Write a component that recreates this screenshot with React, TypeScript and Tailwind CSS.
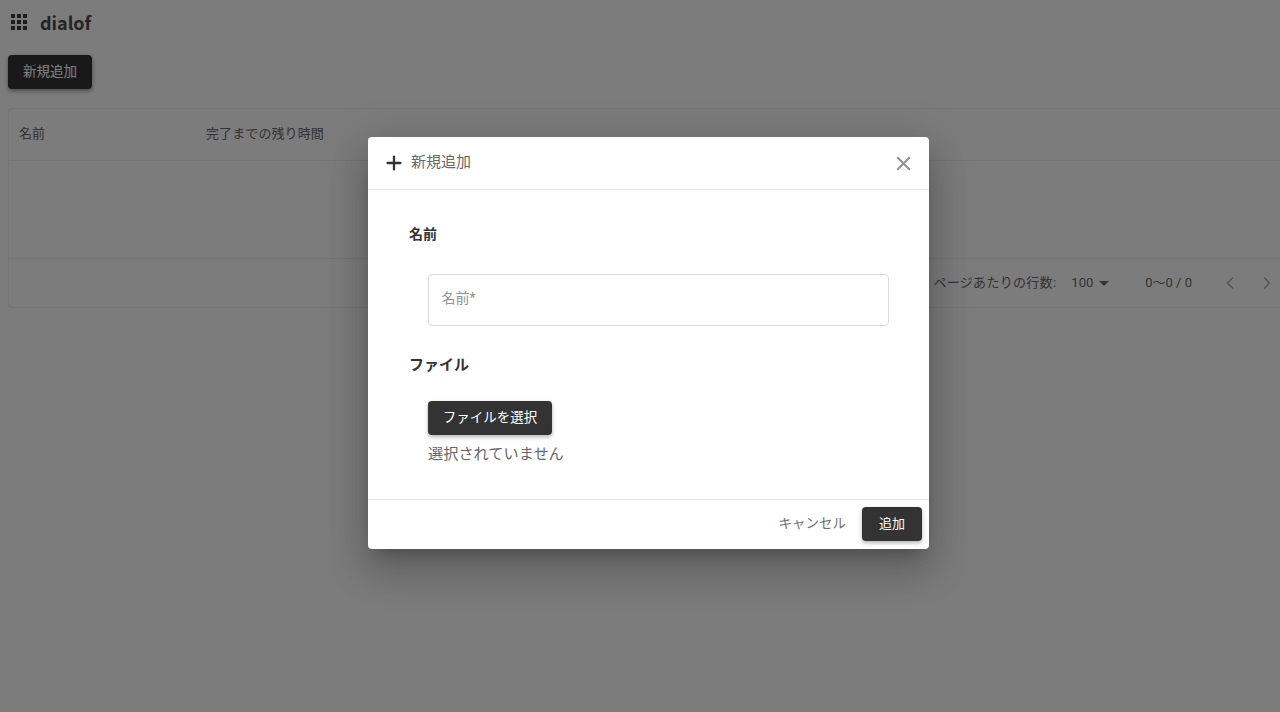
import React from 'react';
import { ChevronLeft, ChevronRight, Plus, X } from 'lucide-react';

const FONT = "font-['Roboto','Noto_Sans_CJK_JP',sans-serif]";

const GridIcon = () => (
  <svg width="24" height="24" viewBox="0 0 24 24" fill="#3a3a3a">
    <path d="M4 8h4V4H4v4zm6 12h4v-4h-4v4zm-6 0h4v-4H4v4zm0-6h4v-4H4v4zm6 0h4v-4h-4v4zm6-10v4h4V4h-4zm-6 4h4V4h-4v4zm6 6h4v-4h-4v4zm0 6h4v-4h-4v4z" />
  </svg>
);

export default function App() {
  return (
    <div className={`relative h-[712px] w-[1280px] overflow-hidden bg-[#f8f8f8] text-[#666666] ${FONT}`}>
      {/* Page behind the backdrop */}
      <header className="flex h-[44px] items-center pb-[1px] pl-[7px]">
        <GridIcon />
        <span className="ml-[9px] font-['Noto_Sans_CJK_JP',sans-serif] text-[18px] font-bold leading-none text-[#484848]">dialof</span>
      </header>
      <div className="px-2 pt-[11px]">
        <button className="h-[34px] w-[84px] rounded bg-[#333333] pb-[2px] text-[13.5px] text-white shadow-[0_2px_4px_rgba(0,0,0,0.4)]">
          新規追加
        </button>
      </div>
      <div className="ml-2 mt-[19px] h-[200px] w-[1300px] rounded border border-[#ebebeb]">
        <div className="flex h-[52px] items-center border-b border-[#ebebeb] pb-[1px] text-[13px]">
          <span className="w-[197px] pl-[10px]">名前</span>
          <span className="tracking-[0.1px]">完了までの残り時間</span>
        </div>
        <div className="h-[98px] border-b border-[#ebebeb]" />
        <div className="flex h-[48px] items-center justify-end pb-[1px] pr-[30px] text-[13px]">
          <span className="tracking-[0.3px]">ページあたりの行数:</span>
          <span className="ml-[15px]">100</span>
          <svg className="ml-[3px]" width="16" height="16" viewBox="0 0 16 16" fill="#666666">
            <path d="M3 6h10l-5 5z" />
          </svg>
          <span className="ml-[33px]">0〜0 / 0</span>
          <ChevronLeft className="ml-[28px] text-[#a8a8a8]" size={20} strokeWidth={1.75} />
          <ChevronRight className="ml-[17px] text-[#a8a8a8]" size={20} strokeWidth={1.75} />
        </div>
      </div>

      {/* Backdrop */}
      <div className="absolute inset-0 bg-black/50" />

      {/* Dialog */}
      <div className="absolute left-[368px] top-[137px] flex h-[412px] w-[561px] flex-col rounded bg-white shadow-[0_11px_15px_-7px_rgba(0,0,0,0.2),0_24px_38px_3px_rgba(0,0,0,0.14),0_9px_46px_8px_rgba(0,0,0,0.12)]">
        <div className="flex h-[53px] items-center border-b border-[#e8e8e8] pl-[15px] pr-[14px]">
          <Plus className="text-[#333333]" size={22} strokeWidth={2.5} />
          <span className="ml-[6px] pb-[2px] text-[15px] text-[#666666]">新規追加</span>
          <X className="ml-auto text-[#8f8f8f]" size={23} strokeWidth={2} />
        </div>
        <div className="flex-1 pl-[41px] pt-[34px]">
          <h3 className="text-[14px] font-bold leading-[20px] text-[#333333]">名前</h3>
          <div className="ml-[18.5px] mt-[30px] flex h-[52px] w-[461px] items-center rounded border border-[#dcdcdc] pb-[3px] pl-[13px] text-[14px] text-[#909090]">
            名前*
          </div>
          <h3 className="mt-[29px] text-[15px] font-bold leading-[20px] text-[#333333]">ファイル</h3>
          <div className="ml-[19px] mt-[26px]">
            <button className="h-[34px] w-[124px] rounded bg-[#333333] pb-[1px] text-[13.5px] text-white shadow-[0_2px_4px_rgba(0,0,0,0.3)]">
              ファイルを選択
            </button>
            <p className="mt-[8px] text-[15.2px] leading-[22px] text-[#666666]">選択されていません</p>
          </div>
        </div>
        <div className="flex h-[50px] items-center justify-end border-t border-[#e8e8e8] pb-[2px] pr-[7px]">
          <span className="text-[13.5px] text-[#707070]">キャンセル</span>
          <button className="ml-[16px] h-[34px] w-[60px] rounded bg-[#333333] text-[13px] text-white shadow-[0_2px_4px_rgba(0,0,0,0.3)]">
            追加
          </button>
        </div>
      </div>
    </div>
  );
}
